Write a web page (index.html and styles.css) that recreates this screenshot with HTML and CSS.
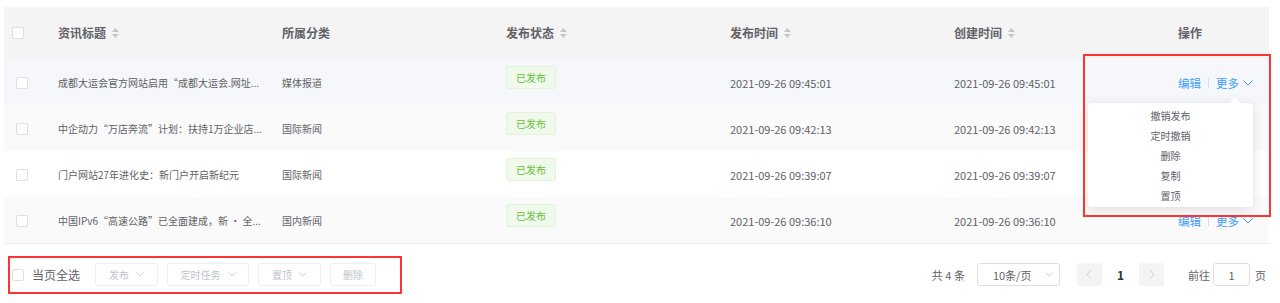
FILE: index.html
```html
<!DOCTYPE html>
<html lang="zh-CN">
<head>
<meta charset="UTF-8">
<meta name="viewport" content="width=device-width, initial-scale=1.0">
<link rel="stylesheet" href="styles.css">
<title>资讯管理</title>
</head>
<body>
<div class="page">
  <div class="table">
    <div class="row head">
      <div class="cell check"><span class="box"></span></div>
      <div class="cell">资讯标题 <svg class="sort" width="7" height="10" viewBox="0 0 7 10"><path d="M3.5 0L7 4H0z"/><path d="M3.5 10L0 6h7z"/></svg></div>
      <div class="cell">所属分类</div>
      <div class="cell">发布状态 <svg class="sort" width="7" height="10" viewBox="0 0 7 10"><path d="M3.5 0L7 4H0z"/><path d="M3.5 10L0 6h7z"/></svg></div>
      <div class="cell">发布时间 <svg class="sort" width="7" height="10" viewBox="0 0 7 10"><path d="M3.5 0L7 4H0z"/><path d="M3.5 10L0 6h7z"/></svg></div>
      <div class="cell">创建时间 <svg class="sort" width="7" height="10" viewBox="0 0 7 10"><path d="M3.5 0L7 4H0z"/><path d="M3.5 10L0 6h7z"/></svg></div>
      <div class="cell">操作</div>
    </div>

    <div class="row hover">
      <div class="cell check"><span class="box"></span></div>
      <div class="cell">成都大运会官方网站启用“成都大运会.网址...</div>
      <div class="cell">媒体报道</div>
      <div class="cell"><span class="tag">已发布</span></div>
      <div class="cell time">2021-09-26 09:45:01</div>
      <div class="cell time">2021-09-26 09:45:01</div>
      <div class="cell ops"><a>编辑</a><i class="sep"></i><a>更多 <svg class="chev" width="10" height="6" viewBox="0 0 10 6"><path d="M0.5 0.5L5 5l4.5-4.5"/></svg></a></div>
    </div>

    <div class="row stripe">
      <div class="cell check"><span class="box"></span></div>
      <div class="cell">中企动力“万店奔流”计划：扶持1万企业店...</div>
      <div class="cell">国际新闻</div>
      <div class="cell"><span class="tag">已发布</span></div>
      <div class="cell time">2021-09-26 09:42:13</div>
      <div class="cell time">2021-09-26 09:42:13</div>
      <div class="cell ops"><a>编辑</a><i class="sep"></i><a>更多 <svg class="chev" width="10" height="6" viewBox="0 0 10 6"><path d="M0.5 0.5L5 5l4.5-4.5"/></svg></a></div>
    </div>

    <div class="row">
      <div class="cell check"><span class="box"></span></div>
      <div class="cell">门户网站27年进化史：新门户开启新纪元</div>
      <div class="cell">国际新闻</div>
      <div class="cell"><span class="tag">已发布</span></div>
      <div class="cell time">2021-09-26 09:39:07</div>
      <div class="cell time">2021-09-26 09:39:07</div>
      <div class="cell ops"><a>编辑</a><i class="sep"></i><a>更多 <svg class="chev" width="10" height="6" viewBox="0 0 10 6"><path d="M0.5 0.5L5 5l4.5-4.5"/></svg></a></div>
    </div>

    <div class="row stripe">
      <div class="cell check"><span class="box"></span></div>
      <div class="cell">中国IPv6“高速公路”已全面建成，新 • 全...</div>
      <div class="cell">国内新闻</div>
      <div class="cell"><span class="tag">已发布</span></div>
      <div class="cell time">2021-09-26 09:36:10</div>
      <div class="cell time">2021-09-26 09:36:10</div>
      <div class="cell ops"><a>编辑</a><i class="sep"></i><a>更多 <svg class="chev" width="10" height="6" viewBox="0 0 10 6"><path d="M0.5 0.5L5 5l4.5-4.5"/></svg></a></div>
    </div>
  </div>

  <div class="footer">
    <div class="batch">
      <span class="box"></span>
      <span class="all">当页全选</span>
      <button class="btn w63">发布 <svg class="chev" width="8" height="5" viewBox="0 0 10 6"><path d="M0.5 0.5L5 5l4.5-4.5"/></svg></button>
      <button class="btn w82">定时任务 <svg class="chev" width="8" height="5" viewBox="0 0 10 6"><path d="M0.5 0.5L5 5l4.5-4.5"/></svg></button>
      <button class="btn w63">置顶 <svg class="chev" width="8" height="5" viewBox="0 0 10 6"><path d="M0.5 0.5L5 5l4.5-4.5"/></svg></button>
      <button class="btn w46">删除</button>
    </div>
    <div class="pager">
      <span class="total">共 4 条</span>
      <span class="select">10条/页 <svg class="chev" width="8" height="5" viewBox="0 0 10 6"><path d="M0.5 0.5L5 5l4.5-4.5"/></svg></span>
      <span class="nav"><svg width="6" height="9" viewBox="0 0 6 10"><path d="M5 0.5L0.8 5 5 9.5"/></svg></span>
      <span class="num">1</span>
      <span class="nav"><svg width="6" height="9" viewBox="0 0 6 10"><path d="M1 0.5L5.2 5 1 9.5"/></svg></span>
      <span class="goto">前往</span>
      <span class="jump">1</span>
      <span class="unit">页</span>
    </div>
  </div>

  <div class="menu">
    <div class="item">撤销发布</div>
    <div class="item">定时撤销</div>
    <div class="item">删除</div>
    <div class="item">复制</div>
    <div class="item">置顶</div>
  </div>

  <div class="mark mark-ops"></div>
  <div class="mark mark-batch"></div>
</div>
</body>
</html>
```

FILE: styles.css
```css
* {
    box-sizing: border-box;
}

body {
    margin: 0;
    background: #fff;
    font-family: "Noto Sans CJK SC", "Noto Sans", sans-serif;
    color: #606266;
}

.page {
    position: relative;
    padding: 7px 11px 0 4px;
    height: 303px;
}

.table {
    width: 1265px;
    border-bottom: 1px solid #ebeef5;
}

.row {
    display: grid;
    grid-template-columns: 44px 224px 224px 224px 224px 224px 1fr;
    height: 46px;
    font-size: 10px;
}

.row.head {
    height: 52px;
    background: #f4f4f5;
    font-size: 12px;
    font-weight: 700;
}

.row.hover {
    background: #f5f7fa;
}

.row.stripe {
    background: #fafafa;
}

.cell {
    display: flex;
    align-items: center;
    padding-left: 10px;
    white-space: nowrap;
}

.head .cell {
    padding-bottom: 1px;
}

.cell.time {
    font-size: 11px;
    padding-top: 1px;
}

.cell.check {
    padding-left: 12px;
    padding-top: 1px;
}

.head .cell.check {
    padding-left: 8px;
}

.box {
    display: inline-block;
    width: 12px;
    height: 12px;
    border: 1px solid #dcdfe6;
    border-radius: 2px;
    background: #fff;
}

.sort {
    fill: #c0c4cc;
    margin-left: 6px;
}

.tag {
    display: inline-block;
    height: 23px;
    line-height: 21px;
    padding: 0 9px;
    border: 1px solid #e1f3d8;
    border-radius: 3px;
    background: #f0f9eb;
    color: #67c23a;
    font-size: 10px;
    margin-bottom: 9px;
}

.ops {
    justify-content: flex-end;
    padding-right: 16px;
    padding-top: 2px;
    color: #409eff;
    font-size: 11.5px;
}

.ops a {
    display: inline-flex;
    align-items: center;
}

.sep {
    display: inline-block;
    width: 1px;
    height: 10px;
    background: #dcdfe6;
    margin: 0 7px;
}

.chev {
    fill: none;
    stroke: currentColor;
    stroke-width: 1;
    margin-left: 4px;
}

.footer {
    display: flex;
    justify-content: space-between;
    align-items: center;
    margin-top: 19px;
    width: 1262px;
    padding-left: 8px;
}

.batch {
    display: flex;
    align-items: center;
}

.all {
    font-size: 12px;
    margin-left: 8px;
    margin-right: 15px;
}

.btn {
    height: 23px;
    padding: 0;
    margin-right: 9px;
    border: 1px solid #ebeef5;
    border-radius: 3px;
    background: #fff;
    color: #c0c4cc;
    font-family: inherit;
    font-size: 10px;
    display: inline-flex;
    align-items: center;
    justify-content: center;
}

.btn .chev {
    margin-left: 7px;
    color: #c0c4cc;
}

.w63 { width: 63px; }
.w82 { width: 82px; }
.w46 { width: 46px; }

.pager {
    display: flex;
    align-items: center;
    font-size: 11px;
    color: #606266;
}

.total {
    margin-right: 12px;
}

.select {
    width: 83px;
    height: 23px;
    border: 1px solid #dcdfe6;
    border-radius: 3px;
    display: flex;
    align-items: center;
    padding-left: 15px;
    font-size: 11px;
}

.select .chev {
    margin-left: auto;
    margin-right: 6px;
    color: #c0c4cc;
}

.nav {
    width: 25px;
    height: 23px;
    background: #f4f4f5;
    border-radius: 2px;
    display: flex;
    align-items: center;
    justify-content: center;
    margin-left: 17px;
}

.nav svg {
    fill: none;
    stroke: #c0c4cc;
    stroke-width: 1;
}

.num {
    font-size: 12px;
    font-weight: 700;
    color: #303133;
    margin-left: 15px;
    margin-right: -1px;
}

.num + .nav {
    margin-left: 16px;
}

.goto {
    margin-left: 24px;
}

.jump {
    width: 37px;
    height: 23px;
    border: 1px solid #dcdfe6;
    border-radius: 3px;
    margin-left: 3px;
    display: flex;
    align-items: center;
    justify-content: center;
}

.unit {
    margin-left: 5px;
}

.menu {
    position: absolute;
    left: 1088px;
    top: 103px;
    width: 165px;
    height: 104px;
    background: #fff;
    border-radius: 4px;
    box-shadow: 0 2px 12px rgba(0, 0, 0, 0.12);
    padding-top: 3px;
    font-size: 10px;
    color: #606266;
    text-align: center;
}

.menu::before {
    content: "";
    position: absolute;
    top: -5px;
    left: 142px;
    border-left: 5px solid transparent;
    border-right: 5px solid transparent;
    border-bottom: 5px solid #fff;
}

.item {
    line-height: 20px;
}

.mark {
    position: absolute;
    border: 2px solid #ff3333;
}

.mark-ops {
    left: 1083px;
    top: 54px;
    width: 188px;
    height: 163px;
}

.mark-batch {
    left: 8px;
    top: 256px;
    width: 394px;
    height: 38px;
}
```
